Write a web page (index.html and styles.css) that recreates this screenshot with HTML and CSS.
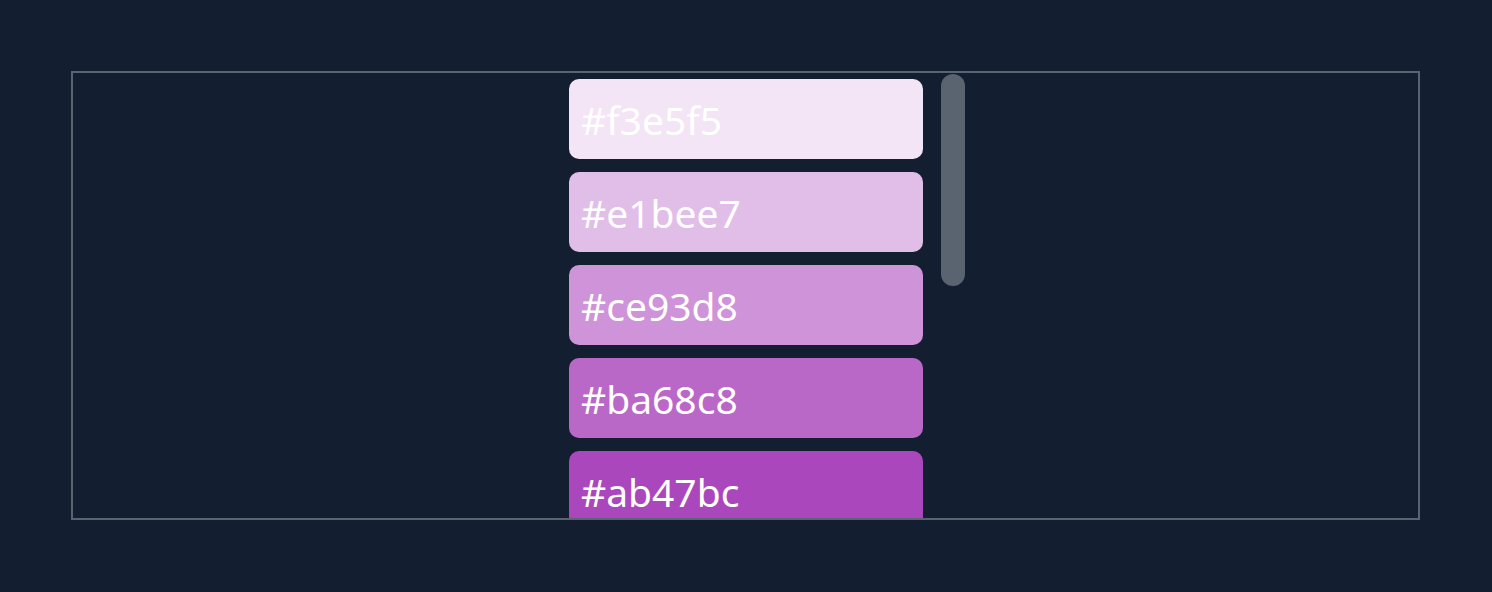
FILE: index.html
```html
<!DOCTYPE html>
<html>
<head>
<meta charset="utf-8">
<link rel="stylesheet" href="styles.css">
</head>
<body>
<div class="frame">
  <div class="list">
    <div class="swatch" style="background:#f3e5f5">#f3e5f5</div>
    <div class="swatch" style="background:#e1bee7">#e1bee7</div>
    <div class="swatch" style="background:#ce93d8">#ce93d8</div>
    <div class="swatch" style="background:#ba68c8">#ba68c8</div>
    <div class="swatch" style="background:#ab47bc">#ab47bc</div>
    <div class="swatch" style="background:#9c27b0">#9c27b0</div>
    <div class="swatch" style="background:#8e24aa">#8e24aa</div>
    <div class="swatch" style="background:#7b1fa2">#7b1fa2</div>
    <div class="swatch" style="background:#6a1b9a">#6a1b9a</div>
    <div class="swatch" style="background:#4a148c">#4a148c</div>
  </div>
  <div class="thumb"></div>
</div>
</body>
</html>
```
FILE: styles.css
```css
html, body {
  margin: 0;
  padding: 0;
  background: #131f30;
}
body {
  padding: 71px 0 0 71px;
  font-family: "Noto Sans", "Open Sans", sans-serif;
}
.frame {
  box-sizing: border-box;
  width: 1349px;
  height: 449px;
  border: 2px solid #5a6470;
  display: flex;
  align-items: flex-start;
  padding-left: 496px;
}
.list {
  width: 354px;
  height: 445px;
  overflow: hidden;
  box-sizing: border-box;
  padding-top: 6px;
  display: flex;
  flex-direction: column;
  gap: 13px;
}
.swatch {
  flex: 0 0 80px;
  height: 80px;
  border-radius: 10px;
  box-sizing: border-box;
  padding: 21px 0 0 12px;
  color: #ffffff;
  font-size: 39px;
  line-height: 39px;
  white-space: nowrap;
}
.thumb {
  margin-left: 18px;
  margin-top: 1px;
  width: 24px;
  height: 212px;
  border-radius: 12px;
  background: #5a6470;
}
```
